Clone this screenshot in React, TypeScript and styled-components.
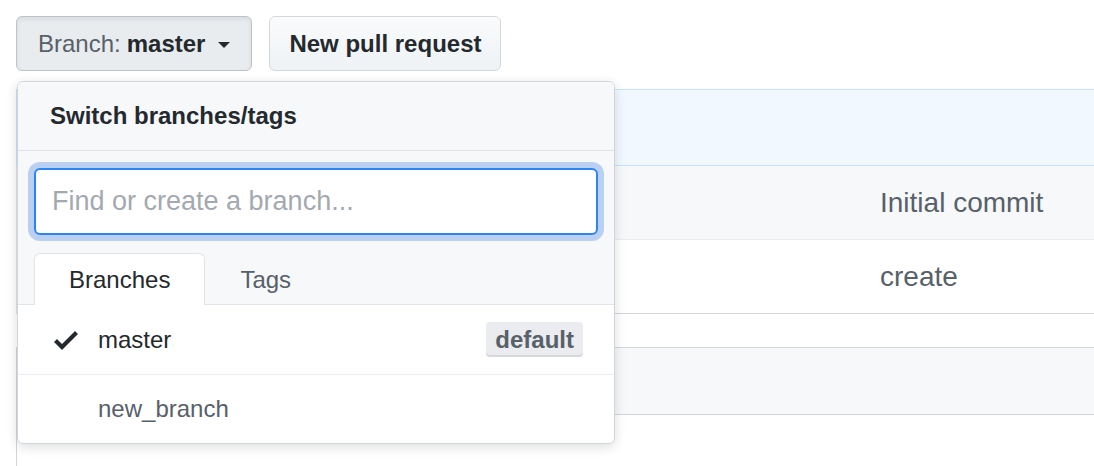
import styled, { createGlobalStyle } from "styled-components";

const GlobalStyle = createGlobalStyle`
  * {
    box-sizing: border-box;
  }
  body {
    margin: 0;
    background: #ffffff;
    font-family: "Liberation Sans", Arial, sans-serif;
    color: #24292e;
    overflow: hidden;
  }
`;

const Page = styled.div`
  padding: 16px 0 0 16px;
  width: 100%;
  min-height: 466px;
  overflow: hidden;
`;

const Toolbar = styled.div`
  display: flex;
  gap: 17px;
  align-items: flex-start;
`;

const BranchSelect = styled.div`
  position: relative;
`;

const Button = styled.button<{ $active?: boolean }>`
  display: inline-flex;
  align-items: center;
  height: 55px;
  padding: ${(p) => (p.$active ? "0 21px 0 21px" : "0 19px")};
  font-family: inherit;
  font-size: 24px;
  font-weight: 700;
  color: #24292e;
  border-radius: 6px;
  border: 1px solid ${(p) => (p.$active ? "#bfc3c8" : "#d5d8db")};
  background: ${(p) =>
    p.$active ? "#e9ecef" : "linear-gradient(#fafbfc, #eff3f6 90%)"};
  box-shadow: ${(p) =>
    p.$active ? "inset 0 2px 4px rgba(27, 31, 35, 0.08)" : "none"};
  cursor: pointer;
`;

const Muted = styled.span`
  font-weight: 400;
  color: #586069;
  margin-right: 6px;
`;

const Caret = styled.span`
  display: inline-block;
  width: 0;
  height: 0;
  margin-left: 13px;
  margin-top: 2px;
  border-top: 6px solid #24292e;
  border-left: 6px solid transparent;
  border-right: 6px solid transparent;
`;

const Dropdown = styled.div`
  position: absolute;
  top: 65px;
  left: 1px;
  width: 598px;
  z-index: 10;
  background: #ffffff;
  border: 1px solid #d1d5da;
  border-radius: 6px;
  box-shadow: 0 3px 12px rgba(27, 31, 35, 0.15);
  overflow: hidden;
`;

const DropdownHeader = styled.div`
  display: flex;
  align-items: center;
  height: 69px;
  padding: 0 32px;
  background: #f6f8fa;
  border-bottom: 1px solid #e1e4e8;
  font-size: 24px;
  font-weight: 700;
`;

const Filter = styled.div`
  padding: 17px 16px 16px;
  background: #f6f8fa;
`;

const FilterInput = styled.input`
  display: block;
  width: 100%;
  height: 67px;
  padding: 0 16px;
  font-family: inherit;
  font-size: 27px;
  color: #24292e;
  background: #ffffff;
  border: 2px solid #2f84f4;
  border-radius: 6px;
  box-shadow: 0 0 0 6px #b9d0f3;
  outline: none;

  &::placeholder {
    color: #a3a9b0;
  }
`;

const Tabs = styled.div`
  display: flex;
  padding: 2px 16px 0;
  background: #f6f8fa;
  border-bottom: 1px solid #e1e4e8;
`;

const Tab = styled.div<{ $selected?: boolean }>`
  display: flex;
  align-items: center;
  height: 52px;
  padding: 0 34px;
  margin-bottom: -1px;
  font-size: 24px;
  color: ${(p) => (p.$selected ? "#24292e" : "#586069")};
  background: ${(p) => (p.$selected ? "#ffffff" : "transparent")};
  border: 1px solid ${(p) => (p.$selected ? "#e1e4e8" : "transparent")};
  border-bottom: 0;
  border-radius: 6px 6px 0 0;
`;

const BranchItem = styled.div<{ $current?: boolean }>`
  display: flex;
  align-items: center;
  height: ${(p) => (p.$current ? "70px" : "68px")};
  padding: 0 31px 0 36px;
  font-size: 24px;
  color: ${(p) => (p.$current ? "#24292e" : "#586069")};
  border-bottom: ${(p) => (p.$current ? "1px solid #eaecef" : "0")};
`;

const CheckSlot = styled.span<{ $visible?: boolean }>`
  display: flex;
  width: 24px;
  margin-right: 20px;
  visibility: ${(p) => (p.$visible ? "visible" : "hidden")};
`;

const DefaultLabel = styled.span`
  display: inline-flex;
  align-items: center;
  height: 35px;
  margin-left: auto;
  padding: 0 9px;
  font-size: 24px;
  font-weight: 700;
  color: #586069;
  background: #eaecef;
  border-radius: 4px;
  box-shadow: inset 0 -2px 0 rgba(27, 31, 35, 0.1);
`;

const FileBox = styled.div`
  margin-top: 18px;
  margin-right: -20px;
  border: 1px solid #e1e4e8;
  border-bottom-color: #d1d5da;
  border-top: 0;
`;

const CommitHeader = styled.div`
  height: 77px;
  margin: 0 -1px;
  background: #f1f8ff;
  border: 1px solid #c8e1ff;
`;

const FileRow = styled.div<{ $hover?: boolean; $first?: boolean }>`
  display: grid;
  grid-template-columns: 863px 1fr;
  align-items: center;
  height: ${(p) => (p.$first ? "73px" : "74px")};
  background: ${(p) => (p.$hover ? "#f6f8fa" : "#ffffff")};
  border-top: ${(p) => (p.$first ? "0" : "1px solid #eaecef")};
`;

const CommitMessage = styled.span`
  grid-column: 2;
  font-size: 28px;
  color: #586069;
`;

const ReadmeBox = styled.div`
  margin-top: 33px;
  margin-right: -20px;
  border: 1px solid #d1d5da;
  border-bottom: 0;
`;

const ReadmeHeader = styled.div`
  height: 67px;
  background: #f6f8fa;
  border-bottom: 1px solid #d1d5da;
`;

const ReadmeBody = styled.div`
  height: 60px;
`;

const CheckIcon = () => (
  <svg width="24" height="32" viewBox="0 0 12 16" fill="#24292e">
    <path d="M12 5l-8 8-4-4 1.5-1.5L4 10l6.5-6.5L12 5z" />
  </svg>
);

const branches = [
  { name: "master", current: true },
  { name: "new_branch", current: false },
];

const App = () => {
  return (
    <>
      <GlobalStyle />
      <Page>
        <Toolbar>
          <BranchSelect>
            <Button $active>
              <Muted>Branch:</Muted>master
              <Caret />
            </Button>
            <Dropdown>
              <DropdownHeader>Switch branches/tags</DropdownHeader>
              <Filter>
                <FilterInput placeholder="Find or create a branch..." />
              </Filter>
              <Tabs>
                <Tab $selected>Branches</Tab>
                <Tab>Tags</Tab>
              </Tabs>
              {branches.map((b) => (
                <BranchItem key={b.name} $current={b.current}>
                  <CheckSlot $visible={b.current}>
                    <CheckIcon />
                  </CheckSlot>
                  {b.name}
                  {b.current && <DefaultLabel>default</DefaultLabel>}
                </BranchItem>
              ))}
            </Dropdown>
          </BranchSelect>
          <Button>New pull request</Button>
        </Toolbar>
        <FileBox>
          <CommitHeader />
          <FileRow $hover $first>
            <CommitMessage>Initial commit</CommitMessage>
          </FileRow>
          <FileRow>
            <CommitMessage>create</CommitMessage>
          </FileRow>
        </FileBox>
        <ReadmeBox>
          <ReadmeHeader />
          <ReadmeBody />
        </ReadmeBox>
      </Page>
    </>
  );
};

export default App;
